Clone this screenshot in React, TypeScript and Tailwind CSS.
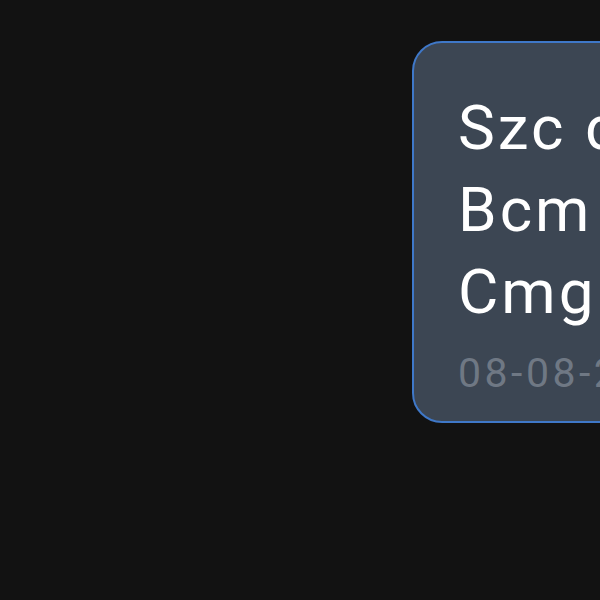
import React from "react";

export default function App() {
    return (
        <div className="w-[600px] h-[600px] overflow-hidden bg-[#121212] flex items-start pt-[41px] pl-[412px]" style={{ fontFamily: "Roboto, 'Noto Sans', sans-serif" }}>
            {/* Message bubble (sent) */}
            <div className="shrink-0 w-[480px] rounded-[30px] border-2 border-[#3f78c8] bg-[#3c4653] pl-[44px] pt-[44px] pb-[23px]">
                <p className="text-white text-[62px] leading-[82px] tracking-[3px] whitespace-nowrap">
                    Szc dfghk lop
                    <br />
                    Bcm qwert
                    <br />
                    Cmg vbnm
                </p>
                <div className="mt-[16px] text-[#6f7884] text-[41px] leading-[49px] tracking-[3.5px] whitespace-nowrap">08-08-2023 12:45</div>
            </div>
        </div>
    );
}
